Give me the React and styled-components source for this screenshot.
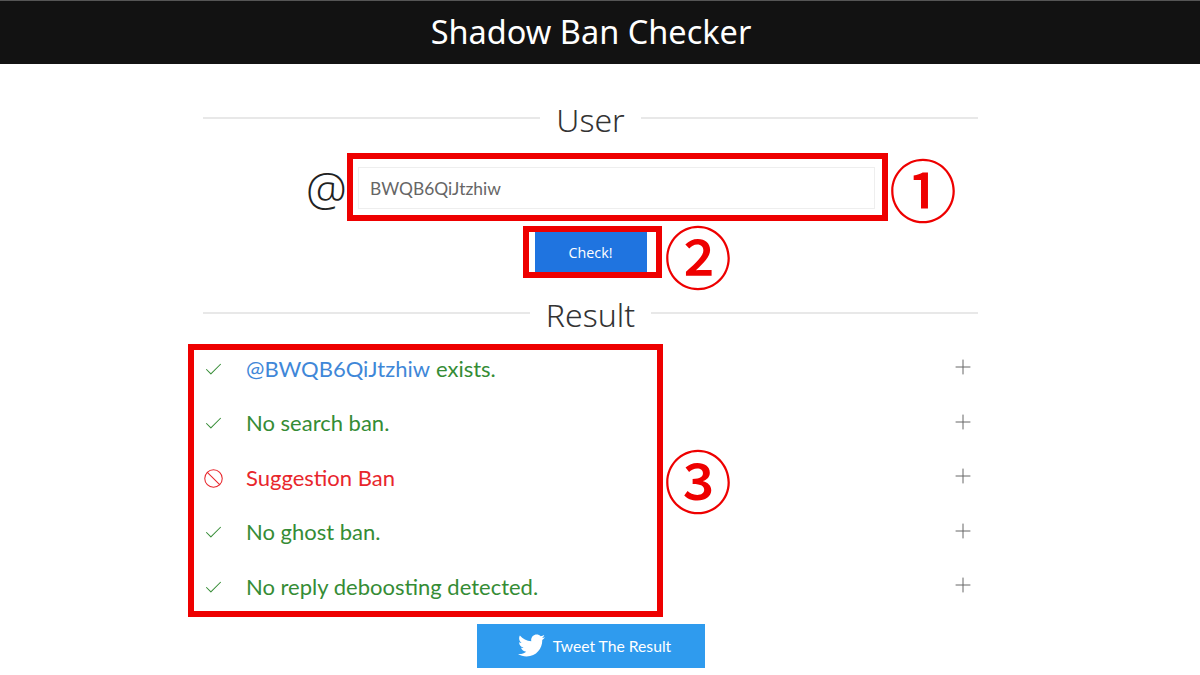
import React from 'react'
import styled, { createGlobalStyle } from 'styled-components'
import { Check, Ban, Plus } from 'lucide-react'
import { FaTwitter } from 'react-icons/fa'

const GlobalStyle = createGlobalStyle`
    html, body {
        margin: 0;
        padding: 0;
        background: #fff;
        font-family: "Lato", "Noto Sans", sans-serif;
    }
`;

const Page = styled.div`
    position: relative;
    width: 1200px;
    height: 675px;
    overflow: hidden;
`;

const Header = styled.header`
    height: 64px;
    background: #121212;
    border-top: 1px solid #555;
    box-sizing: border-box;
    display: flex;
    align-items: center;
    justify-content: center;
    color: #fff;
    font-family: "Noto Sans", sans-serif;
    font-size: 32.5px;
    padding: 0 18px 2px 0;
`;

const Main = styled.main`
    width: 775px;
    margin-left: 203px;
`;

const SectionTitle = styled.div`
    display: flex;
    align-items: center;
    gap: ${p => p.$gap}px;
    box-sizing: border-box;
    height: 46px;
    padding-bottom: 2px;
    margin-top: ${p => p.$top}px;
    color: #333;
    font-family: "Noto Sans", sans-serif;
    font-size: 32px;
    font-weight: 300;

    &::before, &::after {
        content: '';
        flex: 1;
        height: 2px;
        background: #e8e8e8;
        margin-top: -2px;
    }
`;

const UserRow = styled.div`
    display: flex;
    align-items: center;
    height: 42px;
    margin-top: 24px;
    padding-left: 103px;
`;

const At = styled.span`
    width: 52px;
    font-size: 46px;
    color: #222;
    line-height: 42px;
    font-family: "Open Sans", sans-serif;
    font-weight: 300;
`;

const UserInput = styled.div`
    width: 517px;
    height: 42px;
    box-sizing: border-box;
    border: 1px solid #eee;
    padding-left: 11px;
    display: flex;
    align-items: center;
    font-size: 17.4px;
    color: #666;
`;

const CheckButton = styled.button`
    display: block;
    width: 112px;
    height: 41px;
    margin: 23px auto 0;
    border: 0;
    background: #1f74e0;
    color: #fff;
    font-family: "Open Sans", sans-serif;
    font-size: 14.3px;
`;

const ResultList = styled.ul`
    list-style: none;
    margin: 3px 0 0;
    padding: 0;
`;

const ResultRow = styled.li`
    display: flex;
    align-items: center;
    height: 54.5px;
    font-size: 22px;
    color: ${p => p.$bad ? '#e8262c' : '#358c35'};
`;

const StatusIcon = styled.span`
    width: 43px;
    display: flex;
    justify-content: center;
    padding: 2px 22px 0 0;
    box-sizing: border-box;
`;

const UserName = styled.span`
    color: #3f87d8;
    margin-right: 6px;
`;

const RowLabel = styled.span`
    flex: 1;
`;

const Expand = styled.span`
    display: flex;
    color: #666;
    margin-right: 3px;
    padding-bottom: 2px;
`;

const TweetButton = styled.button`
    display: flex;
    align-items: center;
    justify-content: center;
    gap: 8px;
    width: 228px;
    height: 44px;
    margin: 10px auto 0;
    padding: 0 0 0 8px;
    border: 0;
    background: #2f9bee;
    color: #fff;
    font-family: "Lato", sans-serif;
    font-size: 15.7px;
`;

const Callout = styled.div`
    position: absolute;
    left: ${p => p.$x}px;
    top: ${p => p.$y}px;
    width: ${p => p.$w}px;
    height: ${p => p.$h}px;
    box-sizing: border-box;
    border: 6px solid #ee0000;
`;

const Number = styled.span`
    position: absolute;
    left: ${p => p.$x}px;
    top: ${p => p.$y}px;
    font-family: "Noto Sans CJK JP", sans-serif;
    font-size: 68px;
    font-weight: 500;
    line-height: 68px;
    color: #ee0000;
`;

const results = [
    { key: 'exists', label: 'exists.', user: '@BWQB6QiJtzhiw' },
    { key: 'search', label: 'No search ban.' },
    { key: 'suggestion', label: 'Suggestion Ban', bad: true },
    { key: 'ghost', label: 'No ghost ban.' },
    { key: 'reply', label: 'No reply deboosting detected.' },
]

const App = () => {
    return (
        <Page>
            <GlobalStyle />
            <Header>Shadow Ban Checker</Header>
            <Main>
                <SectionTitle $top={33} $gap={16}>User</SectionTitle>
                <UserRow>
                    <At>@</At>
                    <UserInput>BWQB6QiJtzhiw</UserInput>
                </UserRow>
                <CheckButton>Check!</CheckButton>
                <SectionTitle $top={19} $gap={16}>Result</SectionTitle>
                <ResultList>
                    {results.map(r => (
                        <ResultRow key={r.key} $bad={r.bad}>
                            <StatusIcon>
                                {r.bad
                                    ? <Ban size={25} strokeWidth={1.2} />
                                    : <Check size={21} strokeWidth={1.2} />}
                            </StatusIcon>
                            <RowLabel>
                                {r.user && <UserName>{r.user}</UserName>}
                                {r.label}
                            </RowLabel>
                            <Expand><Plus size={24} strokeWidth={1} /></Expand>
                        </ResultRow>
                    ))}
                </ResultList>
                <TweetButton><FaTwitter size={27} />Tweet The Result</TweetButton>
            </Main>

            <Callout $x={347} $y={153} $w={541} $h={68} />
            <Callout $x={523} $y={226} $w={139} $h={52} />
            <Callout $x={188} $y={344} $w={475} $h={273} />
            <Number $x={889} $y={154}>①</Number>
            <Number $x={664} $y={221}>②</Number>
            <Number $x={664} $y={445}>③</Number>
        </Page>
    )
}

export default App;
